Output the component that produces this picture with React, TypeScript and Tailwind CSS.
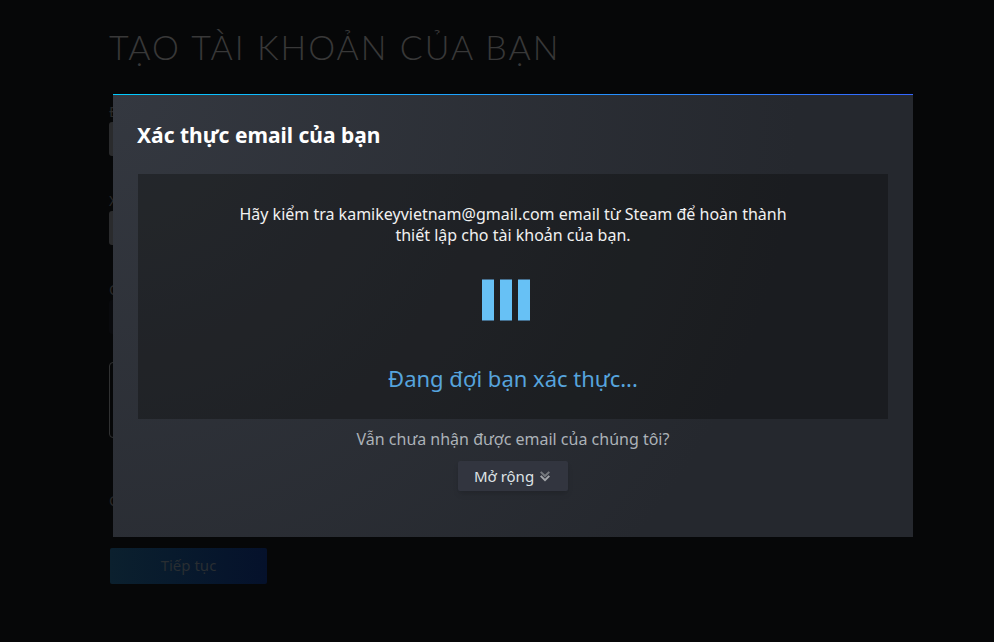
import React from 'react';

interface Field {
  id: string;
  label: string;
}

const fields: Field[] = [
  { id: "email", label: "Địa chỉ email" },
  { id: "confirm", label: "Xác nhận" },
];

const Throbber: React.FC = () => (
  <div className="flex justify-center gap-1.5 pr-3.5" role="status">
    {[0, 1, 2].map((bar) => (
      <span key={bar} className="h-[42px] w-3 border-y border-[#456f8f] bg-[#67c1f5]"></span>
    ))}
  </div>
);

const ExpandIcon: React.FC = () => (
  <svg width="10" height="11" viewBox="0 0 10 11" fill="none" strokeWidth="2" aria-hidden="true">
    <path d="M0.7 0.9 L5 5 L9.3 0.9" stroke="#75787d" />
    <path d="M0.7 4.9 L5 9.2 L9.3 4.9" stroke="#a2a4a8" />
  </svg>
);

const SignupForm: React.FC = () => (
  <form className="pl-[109px] pt-[23px] text-sm text-[#292929]">
    <h1 className="mb-[31px] font-[Lato,sans-serif] text-[34px] font-light leading-[48px] tracking-[2px] text-[#383838] uppercase">
      Tạo tài khoản của bạn
    </h1>
    {fields.map((field) => (
      <div key={field.id} className="mb-[35px]">
        <label htmlFor={field.id} className="block leading-5">{field.label}</label>
        <input id={field.id} className="block h-[34px] w-[300px] rounded-[3px] bg-[#2a2b2d]" />
      </div>
    ))}
    <label htmlFor="country" className="block leading-5">Quốc gia</label>
    <select id="country" className="block h-[34px] w-[300px] appearance-none rounded-[3px] bg-[#090a0d]"></select>
    <div className="mt-7 h-[76px] w-[300px] rounded-[4px] border border-[#303132]"></div>
    <p className="mt-[53px] leading-5">Có</p>
    <button
      type="button"
      className="mt-[37px] ml-px block h-9 w-[157px] rounded-[2px] bg-linear-to-r from-[#0b202e] to-[#05112b] text-[15px] text-[#292e32]"
    >
      Tiếp tục
    </button>
  </form>
);

const VerifyDialog: React.FC = () => (
  <div
    role="dialog"
    aria-labelledby="verify-title"
    className="w-full max-w-[800px] bg-[radial-gradient(circle_at_top_left,#343840_0%,#25282e_75%)] pb-[46px]"
  >
    <div className="h-px bg-linear-to-r from-[#00ccff] to-[#3366ff]"></div>
    <div className="px-6 pt-6">
      <h2 id="verify-title" className="text-[21px] font-bold leading-8 text-white">
        Xác thực email của bạn
      </h2>
      <div className="mx-px mt-[23px] bg-[#030200]/30 px-[90px] pt-[30px] pb-6 text-center">
        <p className="text-base leading-[21px] text-[#f1f1f1]">
          Hãy kiểm tra kamikeyvietnam@gmail.com email từ Steam để hoàn thành thiết lập cho tài khoản của bạn.
        </p>
        <div className="pt-[33px] pb-[41px]">
          <Throbber />
        </div>
        <p className="pb-px text-[22px] leading-8 text-[#56a4dd]">Đang đợi bạn xác thực...</p>
      </div>
      <div className="flex flex-col items-center gap-[11px] pt-[9px]">
        <p className="text-base leading-[22px] text-[#acb2b8]">Vẫn chưa nhận được email của chúng tôi?</p>
        <button
          type="button"
          className="flex h-[30px] items-center gap-1.5 rounded-[2px] bg-[#32353f] pl-4 pr-[18px] text-[15px] text-[#dfe3e6] shadow-md"
        >
          Mở rộng
          <ExpandIcon />
        </button>
      </div>
    </div>
  </div>
);

const App: React.FC = () => {
  return (
    <div className="relative min-h-screen overflow-hidden bg-[#060708] font-[Noto_Sans,sans-serif]">
      <SignupForm />
      <div className="absolute inset-0 flex items-start justify-center pt-[94px] pl-8">
        <VerifyDialog />
      </div>
    </div>
  );
};

export default App;
